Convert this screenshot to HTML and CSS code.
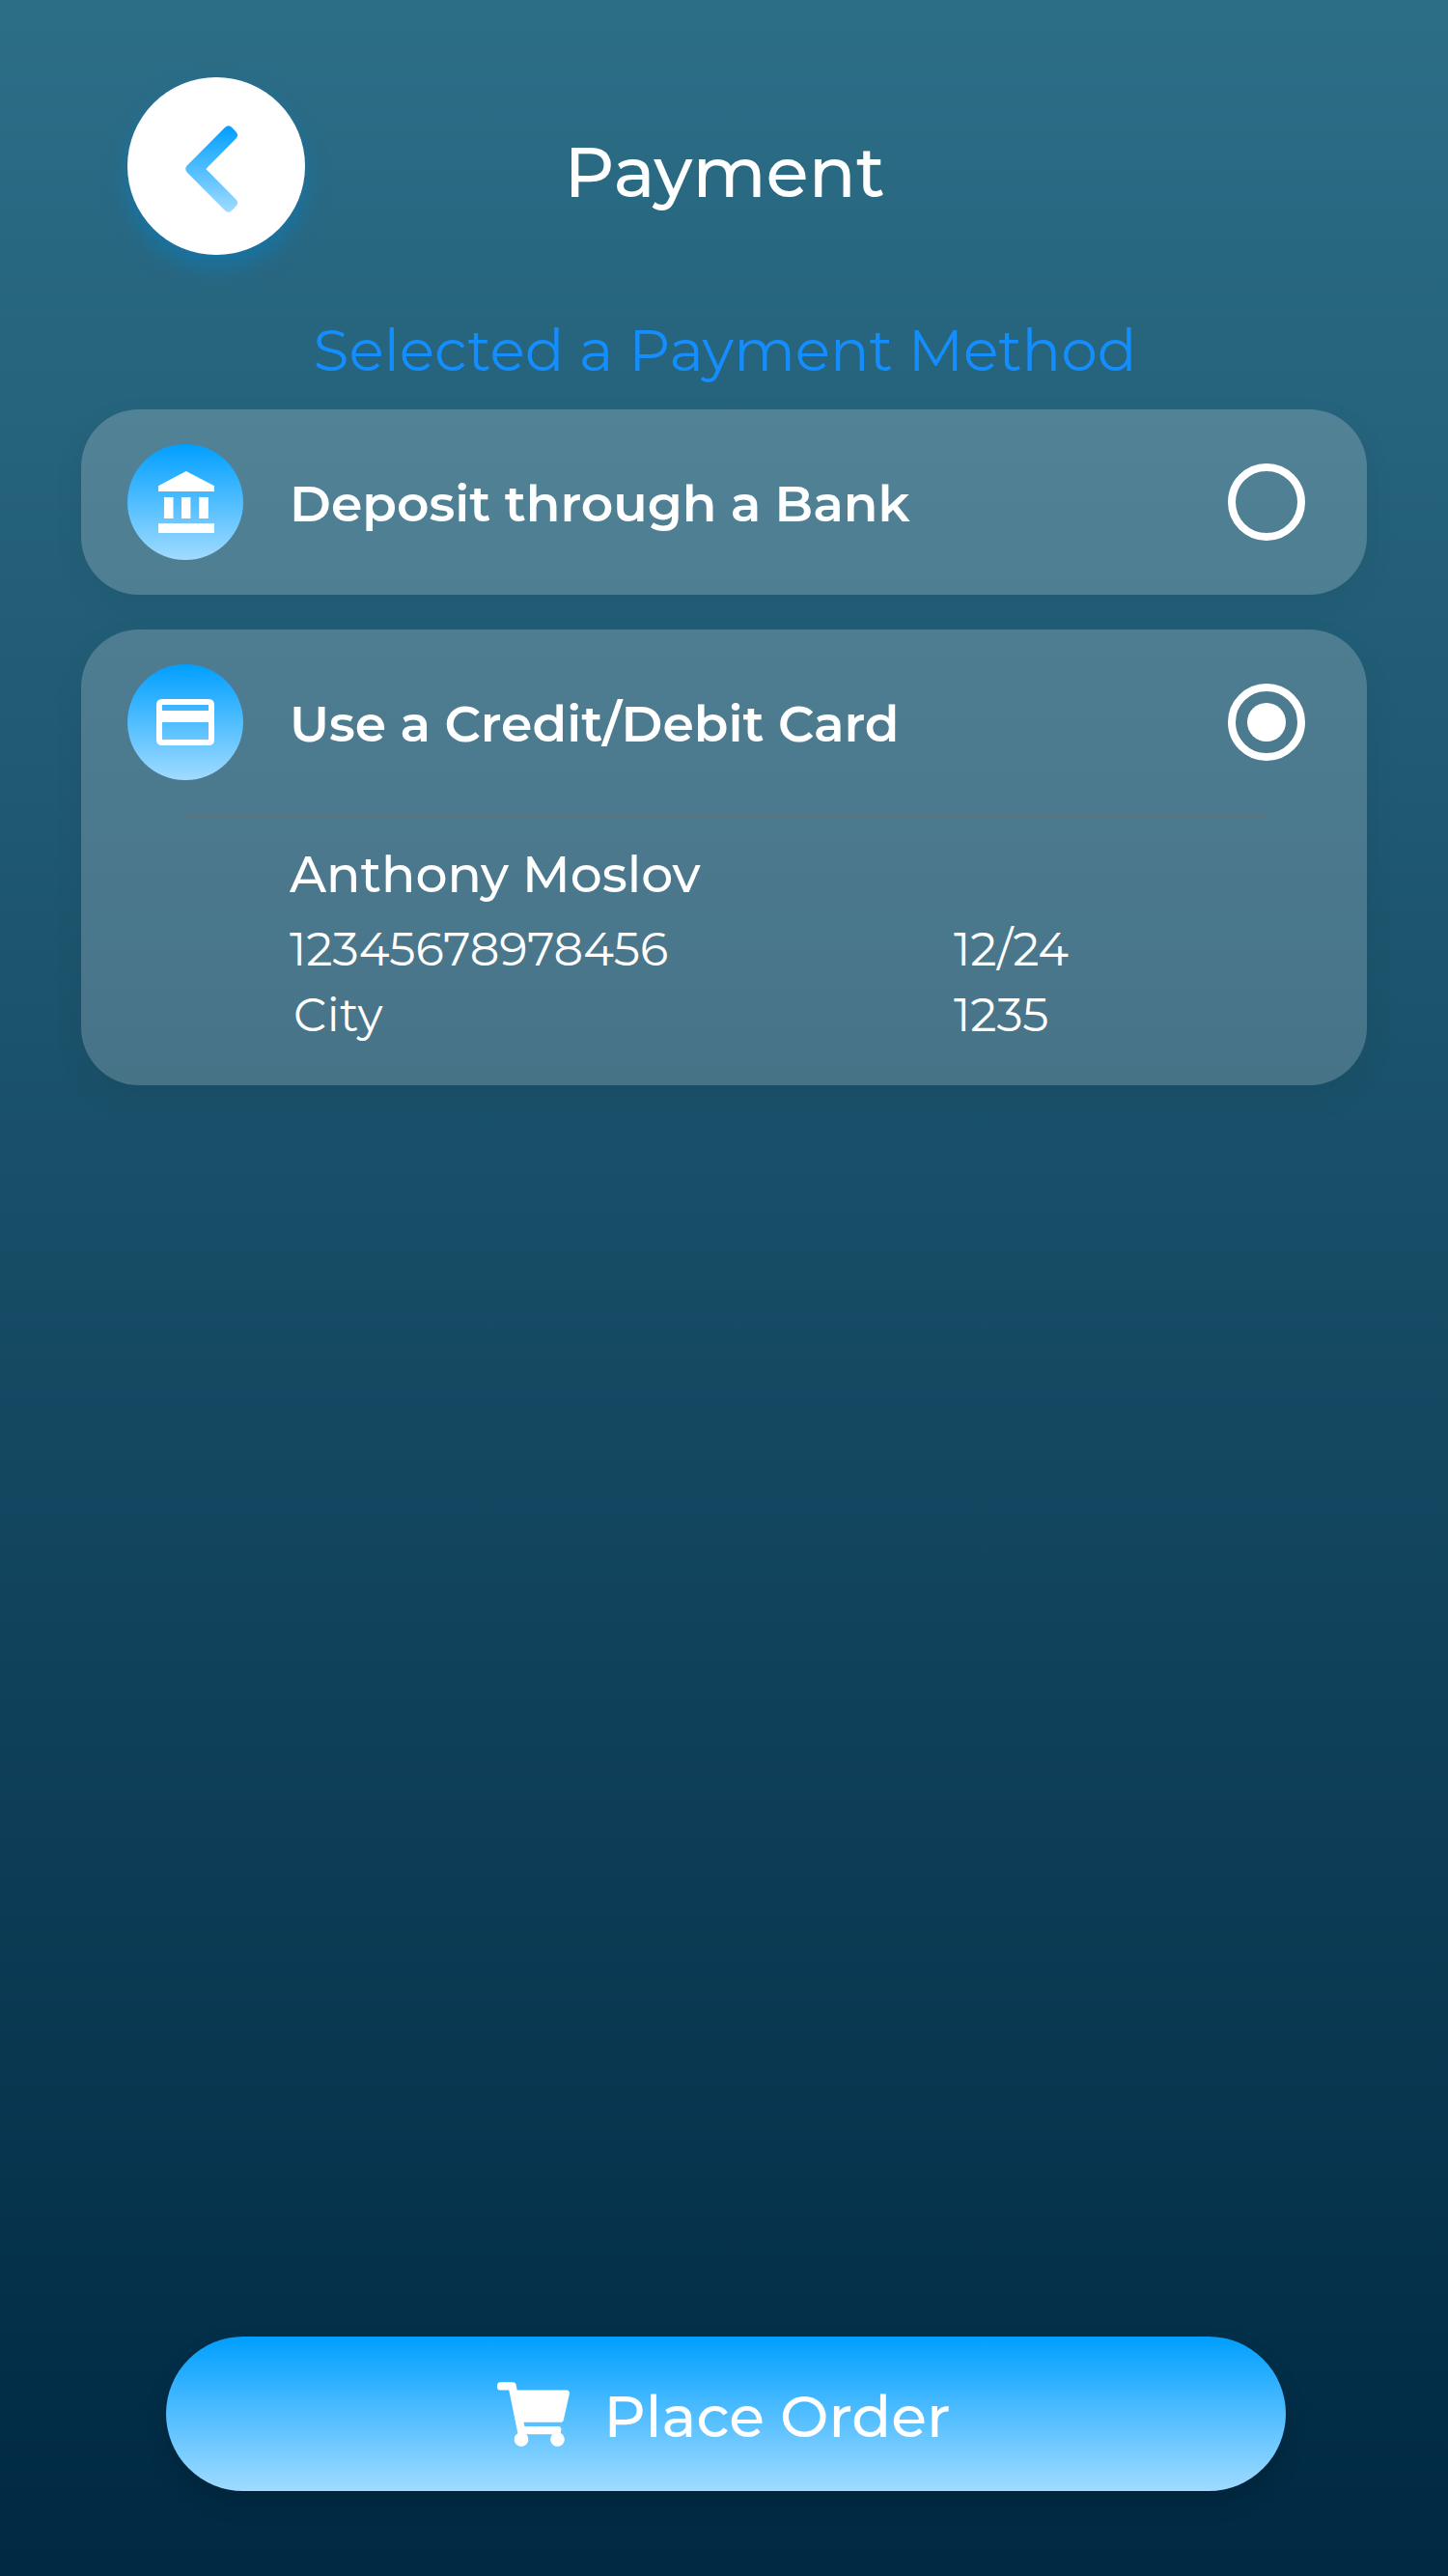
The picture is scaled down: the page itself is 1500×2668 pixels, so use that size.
FILE: index.html
```
<!DOCTYPE html>
<html lang="en">
<head>
<meta charset="utf-8">
<title>Payment</title>
<link rel="stylesheet" href="styles.css">
</head>
<body>
<main class="screen">
  <header class="topbar">
    <button class="back" aria-label="Back">
      <svg width="54" height="90" viewBox="0 0 54 90">
        <defs>
          <linearGradient id="sky" x1="0" y1="0" x2="0" y2="1">
            <stop offset="0" stop-color="#009fff"/>
            <stop offset="1" stop-color="#a0dbff"/>
          </linearGradient>
        </defs>
        <path fill="url(#sky)" d="M2 41.3 41 2.1Q44.5-1.4 48 1.8L52.5 6.5Q55.6 10 52.5 13.4L21.3 45 52.5 76.6Q55.6 80 52.5 83.5L48 88.2Q44.5 91.4 41 87.9L2 48.7Q-1.5 45 2 41.3Z"/>
      </svg>
    </button>
    <h1 class="title">Payment</h1>
  </header>

  <h2 class="subtitle">Selected a Payment Method</h2>

  <section class="methods">
    <article class="card">
      <div class="method">
        <span class="badge">
          <svg class="bank" width="58" height="64" viewBox="0 0 58 64" fill="#fff">
            <path d="M28.8 0 58 15.2V21H0V15.2ZM6 27h9.5v22H6ZM24 27h9.4v22H24ZM42.3 27h9.5v22h-9.5ZM0 54.2h58V64H0Z"/>
          </svg>
        </span>
        <span class="label">Deposit through a Bank</span>
        <span class="radio"></span>
      </div>
    </article>

    <article class="card card-open">
      <div class="method">
        <span class="badge">
          <svg width="60" height="48" viewBox="0 0 60 48" fill="#fff" fill-rule="evenodd">
            <path d="M6 0H54Q60 0 60 6V42Q60 48 54 48H6Q0 48 0 42V6Q0 0 6 0ZM6 6V12H54V6ZM6 24V42H54V24Z"/>
          </svg>
        </span>
        <span class="label">Use a Credit/Debit Card</span>
        <span class="radio radio-on"></span>
      </div>
      <hr class="divider">
      <div class="details">
        <p class="name">Anthony Moslov</p>
        <div class="facts">
          <span>12345678978456</span><span>12/24</span>
          <span class="city">City</span><span>1235</span>
        </div>
      </div>
    </article>
  </section>

  <button class="order">
    <svg width="75" height="67" viewBox="0 0 576 512" fill="#fff">
      <path d="M528.12 301.319l47.273-208C578.806 78.301 567.391 64 551.99 64H159.208l-9.166-44.81C147.758 8.021 137.93 0 126.529 0H24C10.745 0 0 10.745 0 24v16c0 13.255 10.745 24 24 24h69.883l70.248 343.435C147.325 417.1 136 435.222 136 456c0 30.928 25.072 56 56 56s56-25.072 56-56c0-15.674-6.447-29.835-16.824-40h209.647C430.447 426.165 424 440.326 424 456c0 30.928 25.072 56 56 56s56-25.072 56-56c0-22.172-12.888-41.332-31.579-50.405l5.517-24.276c3.413-15.018-8.002-29.319-23.403-29.319H218.117l-6.545-32h293.145c11.206 0 20.92-7.754 23.403-18.681z"/>
    </svg>
    <span class="order-text">Place Order</span>
  </button>
</main>
</body>
</html>
```
FILE: styles.css
```
* {
  box-sizing: border-box;
  margin: 0;
  padding: 0;
}

body {
  font-family: Montserrat, Inter, sans-serif;
  color: #fff;
}

button {
  border: 0;
  font: inherit;
  color: inherit;
}

svg {
  display: block;
}

.screen {
  display: flex;
  flex-direction: column;
  width: 1500px;
  height: 2668px;
  padding: 80px 84px 88px;
  background: linear-gradient(#2d6e87, #002943);
}

.topbar {
  display: grid;
  grid-template-columns: 184px 1fr 184px;
  align-items: center;
  padding: 0 48px;
}

.back {
  display: flex;
  align-items: center;
  justify-content: center;
  width: 184px;
  height: 184px;
  padding: 5px 10px 0 0;
  border-radius: 50%;
  background: #fff;
  box-shadow: 0 12px 24px rgba(0, 132, 212, 0.45);
}

.title {
  padding: 12px 0 0 1px;
  font-size: 72px;
  line-height: 88px;
  font-weight: 500;
  text-align: center;
}

.subtitle {
  margin: 63px 0 25px;
  padding-left: 2px;
  font-size: 60px;
  line-height: 72px;
  font-weight: 400;
  text-align: center;
  color: #148eff;
}

.methods {
  display: flex;
  flex-direction: column;
  gap: 36px;
}

.card {
  height: 192px;
  padding: 36px 64px 0 48px;
  border-radius: 60px;
  background: rgba(255, 255, 255, 0.2);
  box-shadow: 0 12px 36px rgba(0, 0, 0, 0.05);
}

.card-open {
  height: 472px;
}

.method {
  display: flex;
  align-items: center;
  gap: 48px;
  height: 120px;
}

.badge {
  display: flex;
  align-items: center;
  justify-content: center;
  width: 120px;
  height: 120px;
  border-radius: 50%;
  background: linear-gradient(#009fff, #a0dbff);
}

.bank {
  margin-left: 2px;
}

.label {
  flex: 1;
  padding-top: 3px;
  font-size: 52px;
  line-height: 64px;
  font-weight: 600;
}

.radio {
  display: flex;
  align-items: center;
  justify-content: center;
  width: 80px;
  height: 80px;
  border: 8px solid #fff;
  border-radius: 50%;
}

.radio-on::after {
  content: "";
  width: 40px;
  height: 40px;
  border-radius: 50%;
  background: #fff;
}

.divider {
  width: 1124px;
  height: 4px;
  margin: 36px 0 0 58px;
  border: 0;
  background: rgba(112, 112, 112, 0.33);
}

.details {
  padding: 26px 0 0 168px;
}

.name {
  font-size: 52px;
  line-height: 64px;
  font-weight: 500;
}

.facts {
  display: grid;
  grid-template-columns: 688px 1fr;
  margin-top: 11px;
  font-size: 48px;
  line-height: 68px;
}

.city {
  padding-left: 4px;
  letter-spacing: 0.7px;
}

.order {
  display: flex;
  align-items: center;
  justify-content: center;
  gap: 35px;
  width: 1160px;
  height: 160px;
  margin: auto 0 0 88px;
  padding-right: 4px;
  border-radius: 80px;
  background: linear-gradient(#009fff, #a0dbff);
  box-shadow: 0 12px 24px rgba(0, 0, 0, 0.16);
}

.order-text {
  padding-top: 5px;
  font-size: 60px;
  line-height: 72px;
  font-weight: 500;
}
```
